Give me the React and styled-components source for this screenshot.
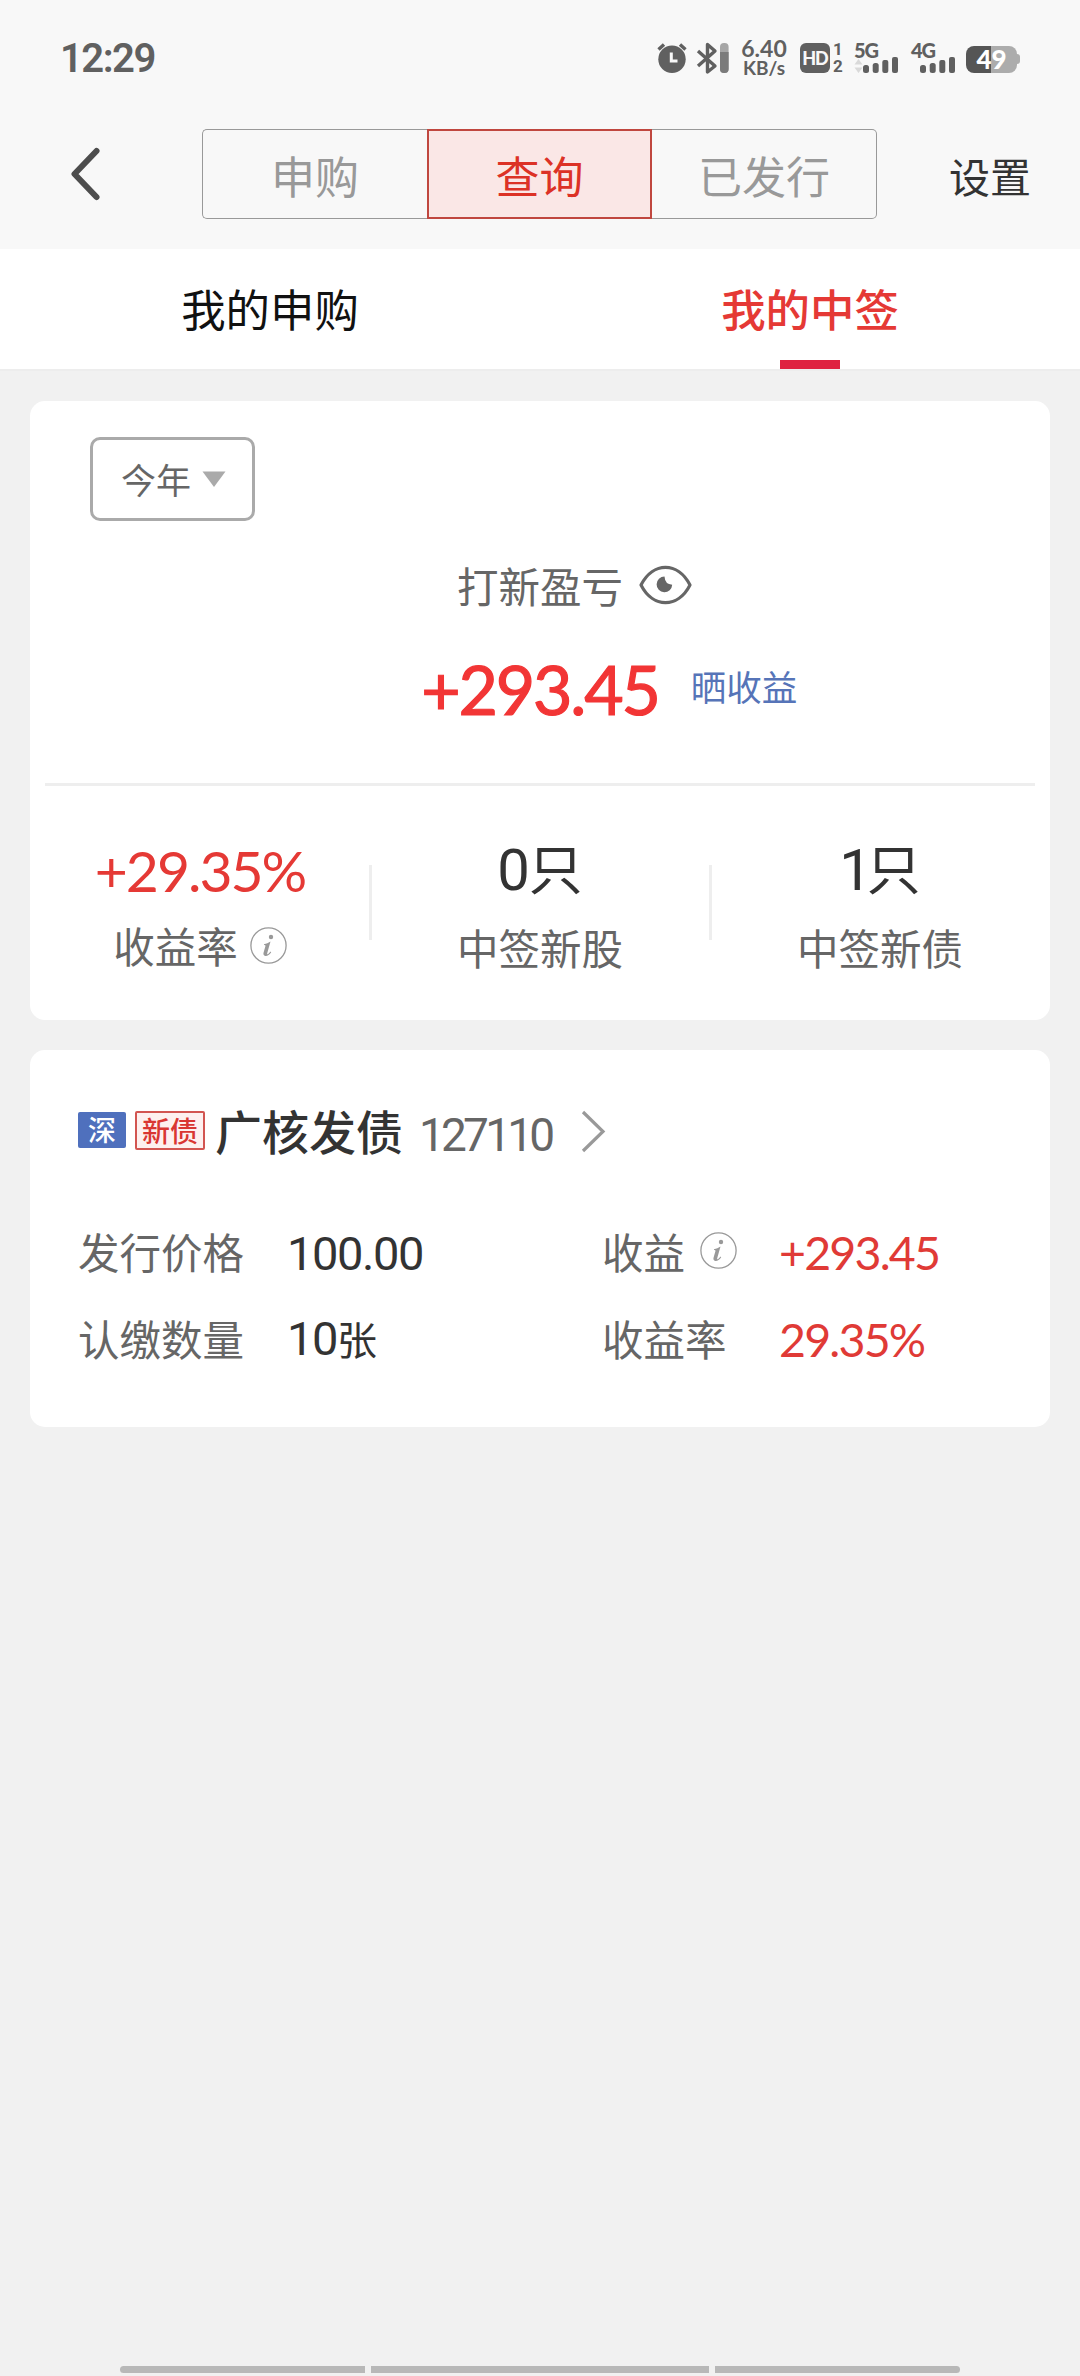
import React from 'react';
import styled, { createGlobalStyle } from 'styled-components';

const cjk = '"Noto Sans CJK SC", sans-serif';
const latin = 'Lato, "Noto Sans CJK SC", sans-serif';
const digits = 'Roboto, "Noto Sans CJK SC", sans-serif';

const GlobalStyle = createGlobalStyle`
  * { box-sizing: border-box; }
  body { margin: 0; background: #f1f1f1; font-family: ${cjk}; }
  svg { display: block; flex: none; overflow: visible; }
`;

const Screen = styled.div`
  width: 1080px;
  height: 2376px;
  display: flex;
  flex-direction: column;
  background: #f1f1f1;
  overflow: hidden;
  white-space: nowrap;
`;

/* Status bar */
const StatusBar = styled.div`
  height: 114px;
  flex: none;
  display: flex;
  align-items: flex-start;
  justify-content: space-between;
  padding: 40px 60px 0 60px;
  background: #f8f8f8;
  color: #606060;
`;
const Clock = styled.div`
  padding-top: 1px;
  font: 600 40px/36px ${digits};
  letter-spacing: -1.5px;
`;
const StatusIcons = styled.div`
  display: flex;
  height: 36px;
`;
const BluetoothWrap = styled.div`
  margin-left: 9px;
`;
const NetSpeed = styled.div`
  width: 50px;
  margin-left: 10px;
  display: flex;
  flex-direction: column;
  align-items: center;
  font: 700 23px/17px ${latin};
`;
const NetUnit = styled.span`
  font-size: 19px;
  line-height: 21px;
`;
const HdBox = styled.div`
  width: 30px;
  height: 30px;
  margin: 3px 0 0 11px;
  border-radius: 6px;
  background: #606060;
  color: #f8f8f8;
  font: 900 18px/30px ${latin};
  letter-spacing: -1px;
  text-align: center;
`;
const SimNumbers = styled.div`
  width: 12px;
  margin: 1px 0 0 2px;
  display: flex;
  flex-direction: column;
  align-items: center;
  font: 700 17px/17px ${digits};
`;
const Signal = styled.div`
  width: 45px;
  margin-left: ${(p) => p.$gap}px;
  display: flex;
  flex-direction: column;
`;
const NetType = styled.span`
  font: 900 20px/17px ${latin};
  padding-top: 2px;
  letter-spacing: -1px;
`;
const BatteryShell = styled.div`
  width: 51px;
  height: 27px;
  margin: 6px 0 0 10px;
  border-radius: 8px;
  background: linear-gradient(to right, #555 25px, #acacac 25px);
  color: #fff;
  font: 900 26px/27px ${latin};
  text-align: center;
`;
const BatteryTip = styled.div`
  width: 3px;
  height: 10px;
  margin-top: 14px;
  border-radius: 0 3px 3px 0;
  background: #acacac;
`;

/* Header */
const Header = styled.header`
  height: 135px;
  flex: none;
  display: flex;
  align-items: flex-start;
  padding: 15px 49px 0 70px;
  background: #f8f8f8;
`;
const BackButton = styled.div`
  width: 132px;
  padding-top: 18px;
`;
const Segments = styled.div`
  display: flex;
`;
const Segment = styled.div`
  width: 225px;
  height: 90px;
  border: 1px solid #999;
  border-width: ${(p) => (p.$active ? '2px' : p.$side === 'left' ? '1px 0 1px 1px' : '1px 1px 1px 0')};
  border-color: ${(p) => (p.$active ? '#c0473f' : '#999')};
  border-radius: ${(p) => (p.$active ? '0' : p.$side === 'left' ? '5px 0 0 5px' : '0 5px 5px 0')};
  background: ${(p) => (p.$active ? '#fae7e6' : 'transparent')};
  color: ${(p) => (p.$active ? '#dc3226' : '#999')};
  display: flex;
  align-items: center;
  justify-content: center;
  font-size: 44px;
  padding-top: 2px;
`;
const Settings = styled.div`
  margin-left: auto;
  font-size: 41px;
  line-height: 92px;
  color: #333;
`;

/* Tabs */
const Tabs = styled.nav`
  height: 120px;
  flex: none;
  display: flex;
  background: #fff;
`;
const Tab = styled.div`
  flex: 1;
  display: flex;
  flex-direction: column;
  align-items: center;
  justify-content: space-between;
  font-size: 44.4px;
  font-weight: ${(p) => (p.$active ? 500 : 400)};
  line-height: 118px;
  color: ${(p) => (p.$active ? '#e53935' : '#111')};
`;
const TabLabel = styled.span`
  height: 111px;
`;
const TabLine = styled.span`
  width: 60px;
  height: 9px;
  background: #df2240;
`;

/* Cards */
const Content = styled.main`
  flex: 1;
  display: flex;
  flex-direction: column;
  gap: 30px;
  padding: 30px 30px 0;
  border-top: 2px solid #ededed;
`;
const Card = styled.section`
  background: #fff;
  border-radius: 15px;
`;
const SummaryCard = styled(Card)`
  height: 619px;
  padding-top: 36px;
`;
const YearSelect = styled.div`
  width: 165px;
  height: 84px;
  margin-left: 60px;
  border: 3px solid #aaa;
  border-radius: 10px;
  display: flex;
  align-items: center;
  gap: 10px;
  padding-left: 28px;
  font-size: 35px;
  line-height: 78px;
  color: #666;
`;
const CenteredRow = styled.div`
  display: grid;
  grid-template-columns: 1fr auto 1fr;
  align-items: center;
  height: ${(p) => p.$h}px;
  margin-top: ${(p) => p.$top}px;
`;
const ProfitTitle = styled.div`
  grid-column: 2;
  font-size: 41.5px;
  line-height: 60px;
  color: #666;
`;
const EyeWrap = styled.div`
  padding: 2px 0 0 16px;
`;
const ProfitValue = styled.div`
  grid-column: 2;
  font: 400 68px/80px ${latin};
  letter-spacing: -2.2px;
  color: #f23535;
  -webkit-text-stroke: 1.2px #f23535;
`;
const ShareLink = styled.a`
  padding-left: 32px;
  margin-bottom: 6px;
  font-size: 35.5px;
  line-height: 60px;
  color: #5674b8;
`;
const Divider = styled.div`
  height: 3px;
  margin: 54px 15px 0;
  background: #eee;
`;
const Stats = styled.div`
  display: flex;
  padding-top: 49px;
`;
const Stat = styled.div`
  flex: 1;
  display: flex;
  flex-direction: column;
  align-items: center;
`;
const StatLine = styled.div`
  width: 3px;
  height: 75px;
  margin: 30px -1.5px 0;
  background: #eee;
`;
const StatValue = styled.div`
  font: 400 ${(p) => (p.$up ? 57 : 58)}px/70px ${(p) => (p.$up ? latin : digits)};
  letter-spacing: ${(p) => p.$track}px;
  color: ${(p) => (p.$up ? '#e53935' : '#333')};
`;
const StatLabel = styled.div`
  display: flex;
  align-items: center;
  gap: 12px;
  font-size: 41.5px;
  line-height: 60px;
  margin-top: 10px;
  color: #666;
`;

/* Bond card */
const BondCard = styled(Card)`
  height: 377px;
  padding: 45px 48px 0;
`;
const BondHead = styled.div`
  display: flex;
  align-items: center;
  height: 70px;
`;
const MarketTag = styled.span`
  width: 48px;
  height: 36px;
  border-radius: 2px;
  background: #4f70bd;
  color: #fff;
  font-size: 28px;
  font-weight: 500;
  line-height: 34px;
  text-align: center;
`;
const KindTag = styled.span`
  width: 70px;
  height: 39px;
  margin-left: 9px;
  border: 2px solid #d25551;
  border-radius: 2px;
  background: #fdf0ef;
  color: #d93632;
  font-size: 28px;
  font-weight: 500;
  line-height: 34px;
  text-align: center;
`;
const BondName = styled.span`
  margin-left: 10px;
  font-size: 47px;
  font-weight: 500;
  line-height: 66px;
  color: #333;
`;
const BondCode = styled.span`
  margin: 10px 30px 0 16px;
  font: 400 46px/60px ${digits};
  letter-spacing: -3.8px;
  color: #666;
`;
const Facts = styled.div`
  display: grid;
  grid-template-columns: 209px 315px 177px 1fr;
  grid-auto-rows: 87px;
  align-items: center;
  margin-top: 42px;
`;
const FactLabel = styled.div`
  display: flex;
  align-items: center;
  gap: 15px;
  font-size: 41.5px;
  line-height: 60px;
  color: #666;
`;
const FactValue = styled.div`
  padding-top: ${(p) => (p.$up ? 3 : 6)}px;
  font: 400 ${(p) => (p.$up ? 46.5 : 47)}px/60px ${(p) => (p.$up ? latin : digits)};
  letter-spacing: ${(p) => (p.$up ? -1.8 : -1.4)}px;
  color: ${(p) => (p.$up ? '#e03a36' : '#333')};
`;
const Unit = styled.span`
  font-size: ${(p) => p.$size}px;
  letter-spacing: 0;
`;

const NavBar = styled.footer`
  display: flex;
  gap: 6px;
  height: 10px;
  padding: 0 120px;
`;
const NavPiece = styled.div`
  flex: ${(p) => p.$w};
  height: 7px;
  background: #b8b8b8;
  border-radius: ${(p) => p.$r || 0};
`;

const InfoIcon = () => (
  <svg width="37" height="37" viewBox="0 0 37 37">
    <circle cx="18.5" cy="18.5" r="17.6" fill="none" stroke="#999" strokeWidth="1.3" />
    <circle cx="21" cy="10" r="2.2" fill="#999" />
    <path d="M14 17.2 Q17.5 16.6 20.5 14.6 L17.2 26.3 Q16.8 28 18.2 27 L20.6 24.6 L21.2 25.2 Q18.3 29.4 15.3 29 Q12.8 28.6 13.6 25.6 L15.4 19.2 Q15.8 17.8 14 18Z" fill="#999" />
  </svg>
);

const EyeIcon = () => (
  <svg width="53" height="40" viewBox="0 0 53 40">
    <path d="M2 19 C14 -4.5 39 -4.5 51 19 C39 42.5 14 42.5 2 19Z" fill="none" stroke="#666" strokeWidth="3.2" strokeLinejoin="round" />
    <path d="M25.5 10.6 A7.8 7.8 0 1 0 33.2 18.8 Q26 18.6 25.5 10.6Z" fill="#666" />
  </svg>
);

const AlarmIcon = () => (
  <svg width="30" height="36" viewBox="0 0 30 36">
    <circle cx="15" cy="19.3" r="13.7" fill="#606060" />
    <path d="M1.5 9.5 L7 4.5 M28.5 9.5 L23 4.5" stroke="#606060" strokeWidth="3.4" />
    <path d="M14.3 12.5 V21 H20.5" fill="none" stroke="#f8f8f8" strokeWidth="3" />
  </svg>
);

const BluetoothIcon = () => (
  <svg width="33" height="36" viewBox="0 0 33 36">
    <path d="M2 11 L19 26 L11.5 32 V4.5 L19 11 L2 26" fill="none" stroke="#606060" strokeWidth="3.4" strokeLinejoin="round" />
    <rect x="24" y="3" width="8.6" height="30" rx="4" fill="#a6a6a6" />
    <path d="M24 12 H32.6 V29 a4 4 0 0 1 -4 4 h-.6 a4 4 0 0 1 -4 -4Z" fill="#7b7b7b" />
  </svg>
);

const SignalBars = ({ arrows }) => (
  <svg width="45" height="17" viewBox="0 0 45 17">
    {arrows && <path d="M0.5 5.5 L4.5 0 L8.5 5.5Z M0.5 8.5 L4.5 14 L8.5 8.5Z" fill="#d9d9d9" />}
    <rect x="9" y="6" width="6" height="8" rx="2.5" fill="#606060" />
    <rect x="18.7" y="4" width="6" height="10" rx="2.5" fill="#606060" />
    <rect x="28.3" y="1" width="6" height="13" rx="2" fill="#606060" />
    <rect x="38" y="-2" width="6" height="16" rx="2" fill="#606060" />
  </svg>
);

export default function App() {
  return (
    <Screen>
      <GlobalStyle />
      <StatusBar>
        <Clock>12:29</Clock>
        <StatusIcons>
          <AlarmIcon />
          <BluetoothWrap>
            <BluetoothIcon />
          </BluetoothWrap>
          <NetSpeed>
            6.40
            <NetUnit>KB/s</NetUnit>
          </NetSpeed>
          <HdBox>HD</HdBox>
          <SimNumbers>
            <span>1</span>
            <span>2</span>
          </SimNumbers>
          <Signal $gap={10}>
            <NetType>5G</NetType>
            <SignalBars arrows />
          </Signal>
          <Signal $gap={12}>
            <NetType>4G</NetType>
            <SignalBars />
          </Signal>
          <BatteryShell>49</BatteryShell>
          <BatteryTip />
        </StatusIcons>
      </StatusBar>

      <Header>
        <BackButton>
          <svg width="32" height="54" viewBox="0 0 32 54">
            <path d="M26.5 4 L4.5 27 L26.5 50" fill="none" stroke="#4d4d4d" strokeWidth="6" strokeLinecap="round" strokeLinejoin="round" />
          </svg>
        </BackButton>
        <Segments>
          <Segment $side="left">申购</Segment>
          <Segment $active>查询</Segment>
          <Segment $side="right">已发行</Segment>
        </Segments>
        <Settings>设置</Settings>
      </Header>

      <Tabs>
        <Tab>
          <TabLabel>我的申购</TabLabel>
        </Tab>
        <Tab $active>
          <TabLabel>我的中签</TabLabel>
          <TabLine />
        </Tab>
      </Tabs>

      <Content>
        <SummaryCard>
          <YearSelect>
            今年
            <svg width="26" height="17" viewBox="0 0 26 17">
              <path d="M1.5 0.5 H24.5 L13 16Z" fill="#aaa" />
            </svg>
          </YearSelect>
          <CenteredRow $h={60} $top={34}>
            <ProfitTitle>打新盈亏</ProfitTitle>
            <EyeWrap>
              <EyeIcon />
            </EyeWrap>
          </CenteredRow>
          <CenteredRow $h={80} $top={34}>
            <ProfitValue>+293.45</ProfitValue>
            <ShareLink>晒收益</ShareLink>
          </CenteredRow>
          <Divider />
          <Stats>
            <Stat>
              <StatValue $up $track={-2}>+29.35%</StatValue>
              <StatLabel>
                收益率
                <InfoIcon />
              </StatLabel>
            </Stat>
            <StatLine />
            <Stat>
              <StatValue $track={-1}>
                0<Unit $size={54}>只</Unit>
              </StatValue>
              <StatLabel>中签新股</StatLabel>
            </Stat>
            <StatLine />
            <Stat>
              <StatValue $track={-5}>
                1<Unit $size={54}>只</Unit>
              </StatValue>
              <StatLabel>中签新债</StatLabel>
            </Stat>
          </Stats>
        </SummaryCard>

        <BondCard>
          <BondHead>
            <MarketTag>深</MarketTag>
            <KindTag>新债</KindTag>
            <BondName>广核发债</BondName>
            <BondCode>127110</BondCode>
            <svg width="26" height="42" viewBox="0 0 26 42">
              <path d="M2 3 L22 22.5 L2 42" fill="none" stroke="#999" strokeWidth="3.2" />
            </svg>
          </BondHead>
          <Facts>
            <FactLabel>发行价格</FactLabel>
            <FactValue>100.00</FactValue>
            <FactLabel>
              收益
              <InfoIcon />
            </FactLabel>
            <FactValue $up>+293.45</FactValue>
            <FactLabel>认缴数量</FactLabel>
            <FactValue>
              10<Unit $size={40}>张</Unit>
            </FactValue>
            <FactLabel>收益率</FactLabel>
            <FactValue $up>29.35%</FactValue>
          </Facts>
        </BondCard>
      </Content>

      <NavBar>
        <NavPiece $w={245} $r="4px 0 0 4px" />
        <NavPiece $w={338} />
        <NavPiece $w={245} $r="0 4px 4px 0" />
      </NavBar>
    </Screen>
  );
}
